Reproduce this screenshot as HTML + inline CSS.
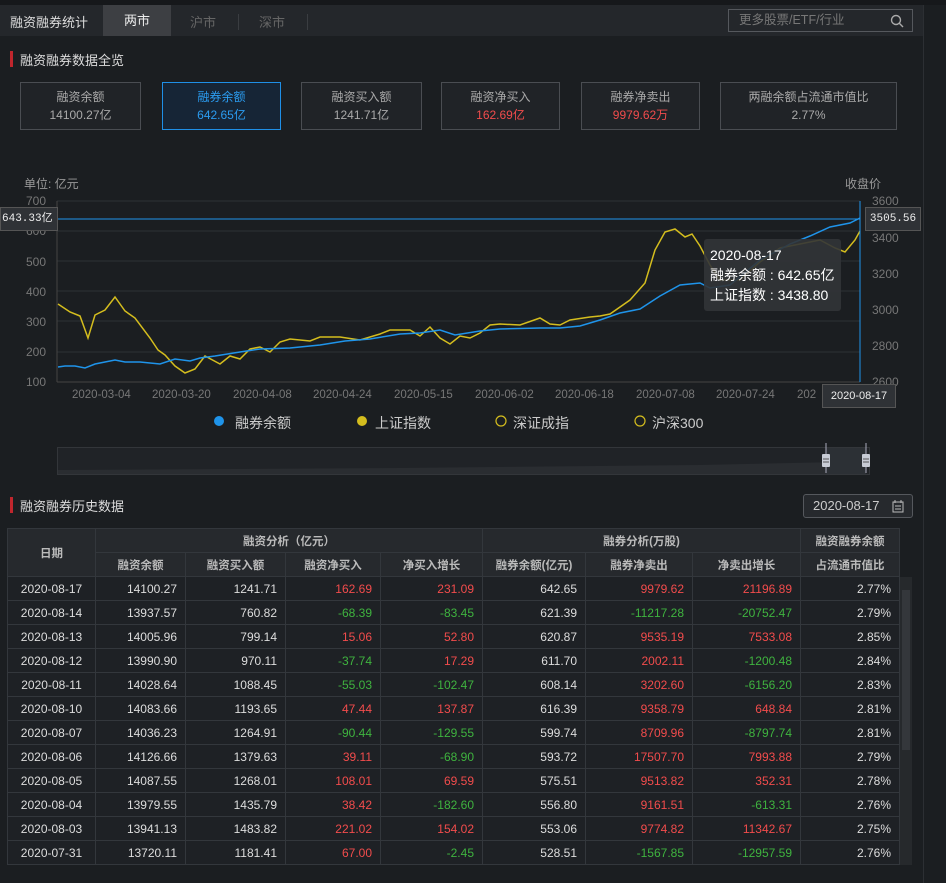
<!DOCTYPE html>
<html><head><meta charset="utf-8">
<style>
*{margin:0;padding:0;box-sizing:border-box}
body{width:946px;height:883px;background:#1b1e21;font-family:"Liberation Sans","Noto Sans CJK SC",sans-serif;color:#ccc;position:relative;overflow:hidden;font-size:12px}
.a{position:absolute}
.top{left:0;top:5px;width:923px;height:31px;background:#24272b}
.card{position:absolute;top:82px;height:48px;border:1px solid #4a4d52;background:#202327;text-align:center;color:#aaa;font-size:12px;line-height:18px;padding-top:5px}
.card b{font-weight:normal;display:block}
.sec{font-size:13px;color:#ddd}
.sec:before{content:"";position:absolute;left:-10px;top:1px;width:3px;height:16px;background:#c0262d}
table{border-collapse:collapse;position:absolute;left:7px;top:528px;width:893px;font-size:12px}
td,th{border:1px solid #33373c;height:24px;text-align:right;padding-right:8px;color:#ddd}
th{background:#26292d;text-align:center;padding:0;color:#bbb;font-weight:bold;font-size:11.5px}
td{background:#1e2125}
td:first-child{text-align:center;padding:0}
.r{color:#f24c4c}.g{color:#3fb33f}
.ax{position:absolute;font-size:12px;color:#777}
</style></head><body>
<div class="a" style="left:0;top:0;width:946px;height:5px;background:#16181b"></div>
<div class="a top"></div>
<div class="a" style="left:923px;top:5px;width:1px;height:878px;background:#2c2f33"></div>
<div class="a" style="left:10px;top:12px;font-size:13px;color:#ddd">融资融券统计</div>
<div class="a" style="left:103px;top:5px;width:68px;height:31px;background:#3d3f43;color:#eee;font-size:13px;text-align:center;line-height:31px">两市</div>
<div class="a" style="left:190px;top:12px;font-size:13px;color:#666">沪市</div>
<div class="a" style="left:238px;top:14px;width:1px;height:16px;background:#3a3d41"></div>
<div class="a" style="left:259px;top:12px;font-size:13px;color:#666">深市</div>
<div class="a" style="left:307px;top:14px;width:1px;height:16px;background:#3a3d41"></div>
<div class="a" style="left:728px;top:9px;width:185px;height:23px;border:1px solid #55585d;color:#777;font-size:12.5px;line-height:21px;padding-left:10px">更多股票/ETF/行业
<svg class="a" style="right:8px;top:4px" width="14" height="14" viewBox="0 0 14 14"><circle cx="6" cy="6" r="4.5" stroke="#aaa" stroke-width="1.4" fill="none"/><path d="M9.3 9.3L13 13" stroke="#aaa" stroke-width="1.4"/></svg></div>

<div class="a sec" style="left:20px;top:50px">融资融券数据全览</div>
<div class="card" style="left:20px;width:121px">融资余额<b>14100.27亿</b></div>
<div class="card" style="left:162px;width:119px;border-color:#1f8fe6;background:#162536;color:#2b9cf0">融券余额<b>642.65亿</b></div>
<div class="card" style="left:301px;width:121px">融资买入额<b>1241.71亿</b></div>
<div class="card" style="left:441px;width:119px">融资净买入<b class="r">162.69亿</b></div>
<div class="card" style="left:581px;width:119px">融券净卖出<b class="r">9979.62万</b></div>
<div class="card" style="left:720px;width:177px">两融余额占流通市值比<b>2.77%</b></div>

<div class="ax" style="left:24px;top:175px;color:#999">单位: 亿元</div>
<div class="ax" style="left:845px;top:175px;color:#999">收盘价</div>
<svg class="a" style="left:0;top:190px" width="946" height="200">
<g stroke="#2e3135" stroke-width="1">
<line x1="57" y1="11" x2="860" y2="11"/><line x1="57" y1="41" x2="860" y2="41"/><line x1="57" y1="71" x2="860" y2="71"/><line x1="57" y1="101" x2="860" y2="101"/><line x1="57" y1="131" x2="860" y2="131"/><line x1="57" y1="162" x2="860" y2="162"/><line x1="57" y1="192" x2="860" y2="192" stroke="#444"/>
<line x1="57" y1="11" x2="57" y2="192" stroke="#444"/>
</g>
</svg>
<div class="ax" style="left:26px;top:194px">700</div>
<div class="ax" style="left:26px;top:224px">600</div>
<div class="ax" style="left:26px;top:255px">500</div>
<div class="ax" style="left:26px;top:285px">400</div>
<div class="ax" style="left:26px;top:315px">300</div>
<div class="ax" style="left:26px;top:345px">200</div>
<div class="ax" style="left:26px;top:375px">100</div>
<div class="ax" style="left:872px;top:194px">3600</div>
<div class="ax" style="left:872px;top:231px">3400</div>
<div class="ax" style="left:872px;top:267px">3200</div>
<div class="ax" style="left:872px;top:303px">3000</div>
<div class="ax" style="left:872px;top:339px">2800</div>
<div class="ax" style="left:872px;top:375px">2600</div>
<div class="ax" style="left:72px;top:389px;font-size:11.5px">2020-03-04</div>
<div class="ax" style="left:152px;top:389px;font-size:11.5px">2020-03-20</div>
<div class="ax" style="left:233px;top:389px;font-size:11.5px">2020-04-08</div>
<div class="ax" style="left:313px;top:389px;font-size:11.5px">2020-04-24</div>
<div class="ax" style="left:394px;top:389px;font-size:11.5px">2020-05-15</div>
<div class="ax" style="left:475px;top:389px;font-size:11.5px">2020-06-02</div>
<div class="ax" style="left:555px;top:389px;font-size:11.5px">2020-06-18</div>
<div class="ax" style="left:636px;top:389px;font-size:11.5px">2020-07-08</div>
<div class="ax" style="left:716px;top:389px;font-size:11.5px">2020-07-24</div>
<div class="ax" style="left:797px;top:389px;font-size:11.5px">202</div>
<svg class="a" style="left:0;top:0" width="946" height="480">
<polyline fill="none" stroke="#d4bd1e" stroke-width="1.5" points="58,304 70,312 80,316 88,338 95,315 105,310 115,297 125,311 135,318 150,338 158,350 165,355 175,366 185,373 195,369 205,356 220,364 230,356 240,359 250,349 260,347 270,352 280,342 290,339 310,341 320,337 340,337 360,340 380,334 390,330 410,330 420,336 430,327 440,338 450,344 460,336 470,338 480,333 490,325 500,324 520,325 540,318 550,324 560,325 570,320 590,317 600,316 610,314 630,300 645,283 655,250 665,232 675,229 685,237 692,234 700,246 710,265 720,280 740,280 760,262 780,248 800,244 820,240 835,248 845,252 855,240 860,231"/>
<polyline fill="none" stroke="#1f94ea" stroke-width="1.5" points="58,367 65,366 75,366 85,368 95,364 105,362 115,360 125,362 140,362 160,364 175,359 190,361 200,358 215,356 240,352 260,349 290,348 320,345 345,341 370,339 400,334 420,333 440,330 455,335 480,331 500,329 540,328 560,328 580,326 600,320 620,313 640,309 660,296 680,285 700,283 710,288 730,285 760,260 790,244 810,236 830,227 850,223 860,218"/>
<line x1="57" y1="219" x2="860" y2="219" stroke="#1f94ea" stroke-width="1"/>
<line x1="860" y1="201" x2="860" y2="382" stroke="#1f94ea" stroke-width="1"/>
<circle cx="219" cy="421" r="5" fill="#1f94ea"/>
<circle cx="362" cy="421" r="5" fill="#d4bd1e"/>
<circle cx="501" cy="421" r="5" fill="none" stroke="#d4bd1e" stroke-width="1.2"/>
<circle cx="640" cy="421" r="5" fill="none" stroke="#d4bd1e" stroke-width="1.2"/>
<rect x="57.5" y="447.5" width="812" height="27" fill="#202327" stroke="#33363a"/>
<path d="M58 470 L400 468 L700 465 L840 462 L866 452 L866 474 L58 474Z" fill="#2a2d31"/>
<rect x="826" y="448" width="40" height="26" fill="#2c3035"/>
<line x1="826" y1="443" x2="826" y2="473" stroke="#aab" /><line x1="866" y1="443" x2="866" y2="473" stroke="#aab"/>
<rect x="822" y="454" width="8" height="13" rx="1" fill="#c8ccd6"/><rect x="862" y="454" width="8" height="13" rx="1" fill="#c8ccd6"/>
<path d="M823 459h6M823 462h6M863 459h6M863 462h6" stroke="#555" stroke-width="1"/>
</svg>
<div class="a" style="left:0;top:207px;width:58px;height:24px;background:#2f3236;border:1px solid #555;color:#eee;font-family:'Liberation Mono',monospace;font-size:11px;line-height:22px;padding-left:1px">643.33亿</div>
<div class="a" style="left:865px;top:207px;width:56px;height:24px;background:#2f3236;border:1px solid #555;color:#eee;font-family:'Liberation Mono',monospace;font-size:11px;line-height:22px;text-align:center">3505.56</div>
<div class="a" style="left:822px;top:384px;width:74px;height:24px;background:#2f3236;border:1px solid #555;color:#eee;font-size:11px;line-height:22px;text-align:center">2020-08-17</div>
<div class="a" style="left:704px;top:239px;width:137px;height:72px;background:rgba(50,52,55,.9);border-radius:3px;color:#fff;font-size:14px;line-height:20px;padding:6px 0 0 6px">2020-08-17<br>融券余额 : 642.65亿<br>上证指数 : 3438.80</div>
<div class="a" style="left:235px;top:413px;font-size:14px;color:#ccc">融券余额</div>
<div class="a" style="left:375px;top:413px;font-size:14px;color:#ccc">上证指数</div>
<div class="a" style="left:513px;top:413px;font-size:14px;color:#ccc">深证成指</div>
<div class="a" style="left:652px;top:413px;font-size:14px;color:#ccc">沪深300</div>

<div class="a sec" style="left:20px;top:496px">融资融券历史数据</div>
<div class="a" style="left:803px;top:494px;width:110px;height:24px;border:1px solid #55585d;border-radius:3px;background:#26292d;color:#ccc;font-size:13px;line-height:22px;padding-left:9px">2020-08-17
<svg class="a" style="left:88px;top:4px" width="12" height="14" viewBox="0 0 12 14"><rect x="1" y="3" width="10" height="10" fill="none" stroke="#bbb"/><path d="M3 1v3M9 1v3M3 7h6M3 10h6" stroke="#bbb"/></svg></div>

<table>
<tr><th rowspan="2" style="width:88px">日期</th><th colspan="4">融资分析（亿元）</th><th colspan="3">融券分析(万股)</th><th>融资融券余额</th></tr>
<tr><th style="width:90px">融资余额</th><th style="width:100px">融资买入额</th><th style="width:95px">融资净买入</th><th style="width:102px">净买入增长</th><th style="width:103px">融券余额(亿元)</th><th style="width:107px">融券净卖出</th><th style="width:108px">净卖出增长</th><th>占流通市值比</th></tr>
<tr><td>2020-08-17</td><td>14100.27</td><td>1241.71</td><td class="r">162.69</td><td class="r">231.09</td><td>642.65</td><td class="r">9979.62</td><td class="r">21196.89</td><td>2.77%</td></tr>
<tr><td>2020-08-14</td><td>13937.57</td><td>760.82</td><td class="g">-68.39</td><td class="g">-83.45</td><td>621.39</td><td class="g">-11217.28</td><td class="g">-20752.47</td><td>2.79%</td></tr>
<tr><td>2020-08-13</td><td>14005.96</td><td>799.14</td><td class="r">15.06</td><td class="r">52.80</td><td>620.87</td><td class="r">9535.19</td><td class="r">7533.08</td><td>2.85%</td></tr>
<tr><td>2020-08-12</td><td>13990.90</td><td>970.11</td><td class="g">-37.74</td><td class="r">17.29</td><td>611.70</td><td class="r">2002.11</td><td class="g">-1200.48</td><td>2.84%</td></tr>
<tr><td>2020-08-11</td><td>14028.64</td><td>1088.45</td><td class="g">-55.03</td><td class="g">-102.47</td><td>608.14</td><td class="r">3202.60</td><td class="g">-6156.20</td><td>2.83%</td></tr>
<tr><td>2020-08-10</td><td>14083.66</td><td>1193.65</td><td class="r">47.44</td><td class="r">137.87</td><td>616.39</td><td class="r">9358.79</td><td class="r">648.84</td><td>2.81%</td></tr>
<tr><td>2020-08-07</td><td>14036.23</td><td>1264.91</td><td class="g">-90.44</td><td class="g">-129.55</td><td>599.74</td><td class="r">8709.96</td><td class="g">-8797.74</td><td>2.81%</td></tr>
<tr><td>2020-08-06</td><td>14126.66</td><td>1379.63</td><td class="r">39.11</td><td class="g">-68.90</td><td>593.72</td><td class="r">17507.70</td><td class="r">7993.88</td><td>2.79%</td></tr>
<tr><td>2020-08-05</td><td>14087.55</td><td>1268.01</td><td class="r">108.01</td><td class="r">69.59</td><td>575.51</td><td class="r">9513.82</td><td class="r">352.31</td><td>2.78%</td></tr>
<tr><td>2020-08-04</td><td>13979.55</td><td>1435.79</td><td class="r">38.42</td><td class="g">-182.60</td><td>556.80</td><td class="r">9161.51</td><td class="g">-613.31</td><td>2.76%</td></tr>
<tr><td>2020-08-03</td><td>13941.13</td><td>1483.82</td><td class="r">221.02</td><td class="r">154.02</td><td>553.06</td><td class="r">9774.82</td><td class="r">11342.67</td><td>2.75%</td></tr>
<tr><td>2020-07-31</td><td>13720.11</td><td>1181.41</td><td class="r">67.00</td><td class="g">-2.45</td><td>528.51</td><td class="g">-1567.85</td><td class="g">-12957.59</td><td>2.76%</td></tr>
</table>
<div class="a" style="left:900px;top:577px;width:12px;height:288px;background:#26292c"></div>
<div class="a" style="left:902px;top:590px;width:8px;height:160px;background:#34373b"></div>
</body></html>
